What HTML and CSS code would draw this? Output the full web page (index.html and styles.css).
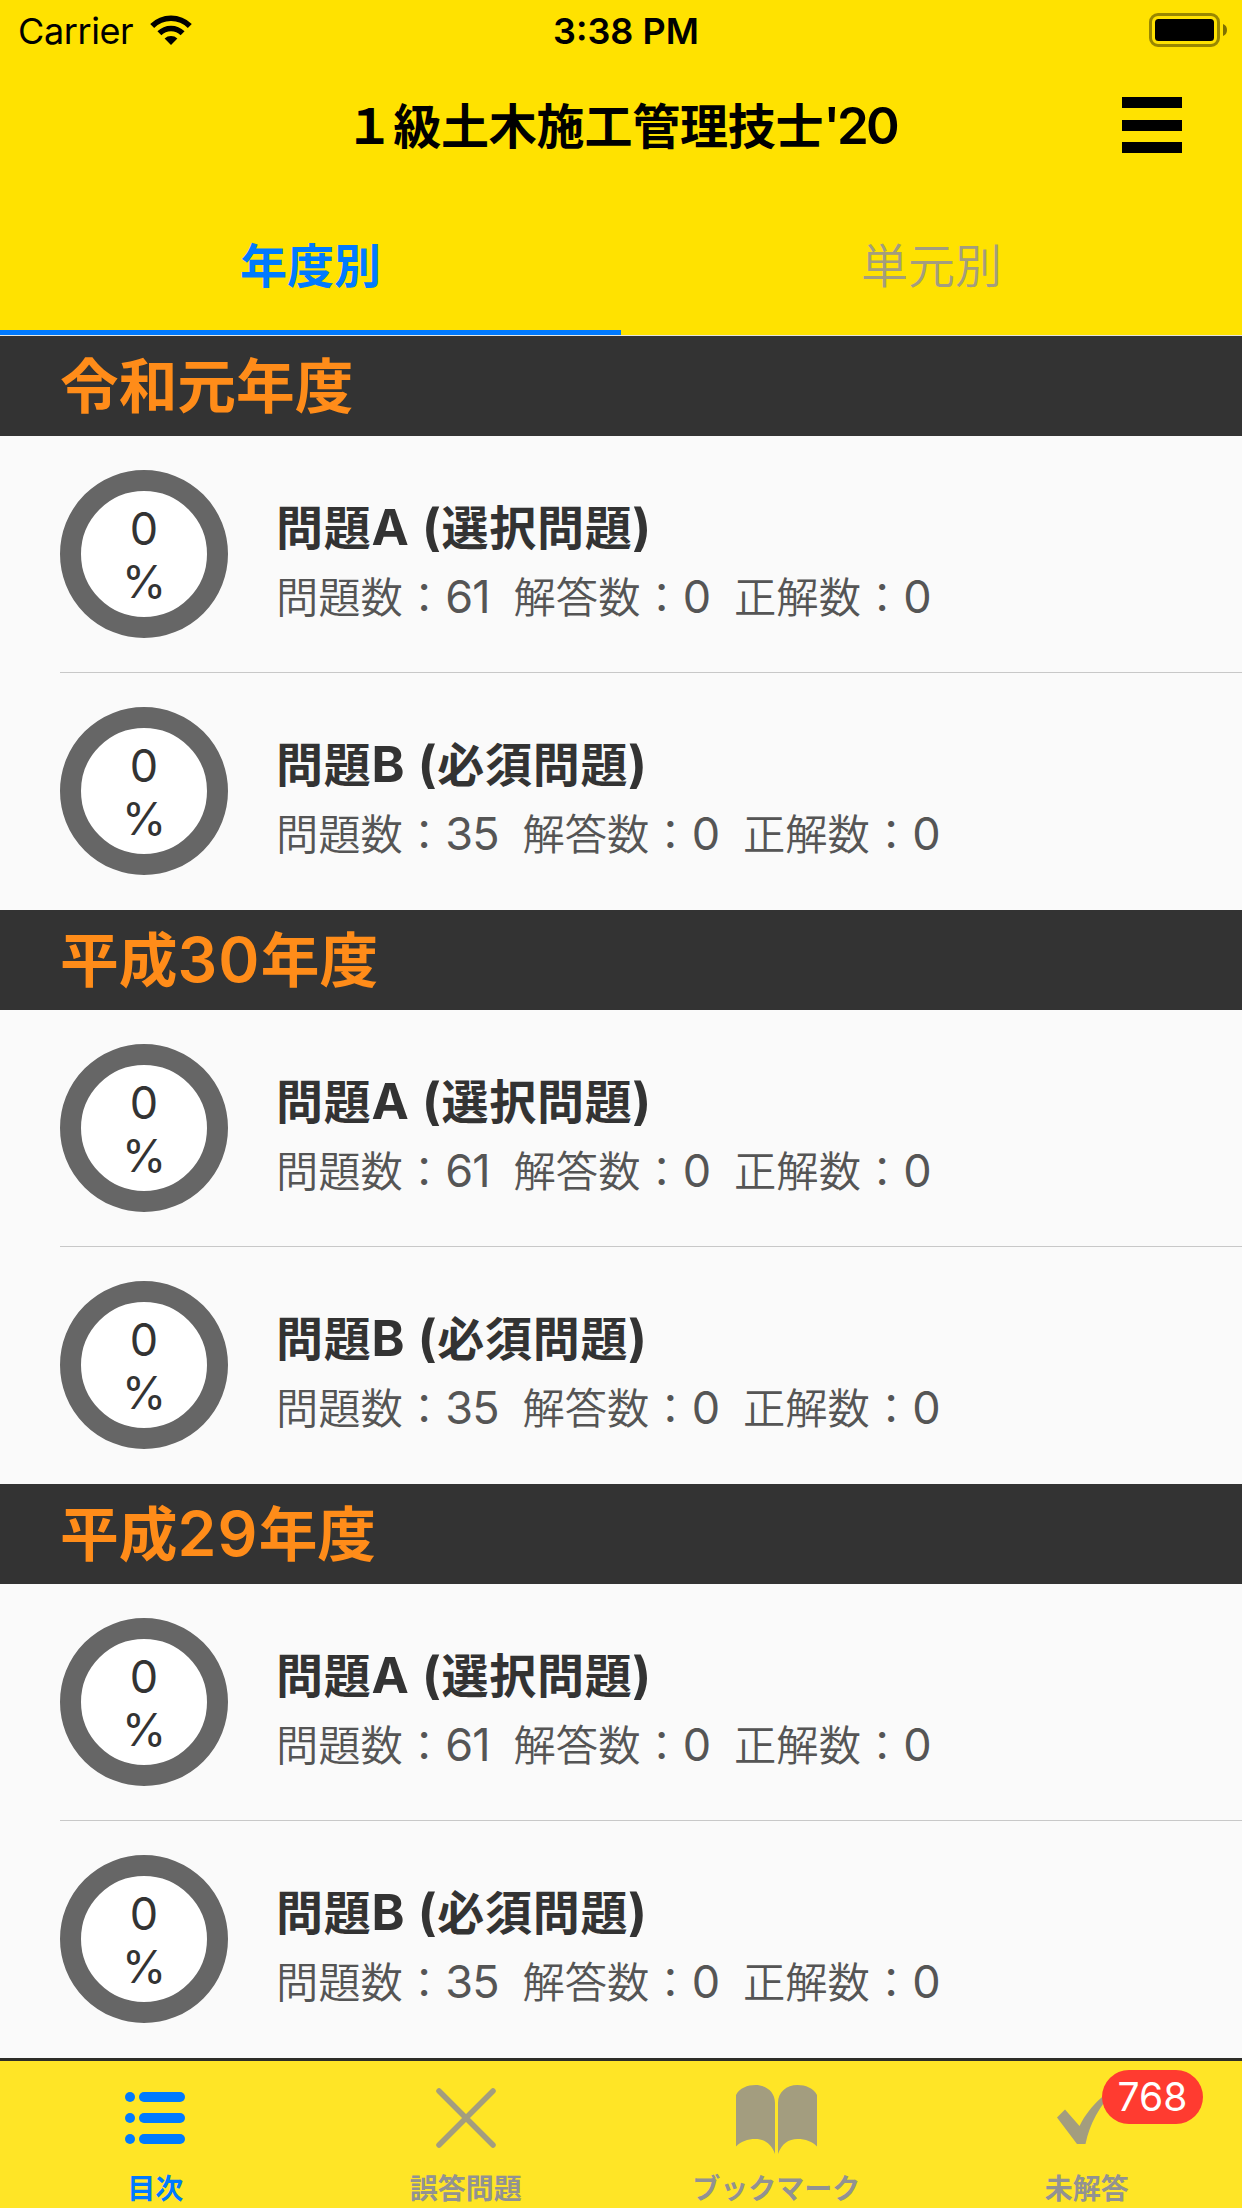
FILE: index.html
```html
<!DOCTYPE html>
<html lang="ja">
<head>
	<meta charset="utf-8">
	<title>１級土木施工管理技士'20</title>
	<link rel="stylesheet" href="styles.css">
</head>
<body>
	<header class="top">
		<div class="status">
			<div class="carrier">
				<span>Carrier</span>
				<svg width="42" height="30" viewBox="0 0 42 30">
					<path d="M21 30L14.600 23.500A9.500 9.500 0 0 1 27.400 23.500Z"/>
					<path d="M9.400 18.300A16.500 16.500 0 0 1 32.600 18.300M2.200 11A26.700 26.700 0 0 1 39.800 11" fill="none" stroke="#000" stroke-width="5.600"/>
				</svg>
			</div>
			<div class="time">3:38 PM</div>
			<div class="battery">
				<svg width="78" height="34" viewBox="0 0 78 34">
					<rect x="1.500" y="1.500" width="68" height="31" rx="7.500" fill="none" stroke="#000" stroke-opacity=".4" stroke-width="3"/>
					<rect x="6" y="6" width="59" height="22" rx="3.500"/>
					<path d="M74 11a6.500 6.500 0 0 1 0 12z" fill-opacity=".5"/>
				</svg>
			</div>
		</div>
		<div class="navbar">
			<h1>１級土木施工管理技士<span class="en">'20</span></h1>
			<div class="menu"><i></i><i></i><i></i></div>
		</div>
		<nav class="tabs">
			<a class="on">年度別</a>
			<a>単元別</a>
		</nav>
	</header>

	<main class="list">
		<section>
			<h2>令和元年度</h2>
			<div class="row">
				<div class="ring"><span>0</span><span>%</span></div>
				<div class="info">
					<h3>問題<span class="en">A (</span>選択問題<span class="en">)</span></h3>
					<p>問題数：<span class="en">61  </span>解答数：<span class="en">0  </span>正解数：<span class="en">0</span></p>
				</div>
			</div>
			<div class="row">
				<div class="ring"><span>0</span><span>%</span></div>
				<div class="info">
					<h3>問題<span class="en">B (</span>必須問題<span class="en">)</span></h3>
					<p>問題数：<span class="en">35  </span>解答数：<span class="en">0  </span>正解数：<span class="en">0</span></p>
				</div>
			</div>
		</section>
		<section>
			<h2>平成<span class="en">30</span>年度</h2>
			<div class="row">
				<div class="ring"><span>0</span><span>%</span></div>
				<div class="info">
					<h3>問題<span class="en">A (</span>選択問題<span class="en">)</span></h3>
					<p>問題数：<span class="en">61  </span>解答数：<span class="en">0  </span>正解数：<span class="en">0</span></p>
				</div>
			</div>
			<div class="row">
				<div class="ring"><span>0</span><span>%</span></div>
				<div class="info">
					<h3>問題<span class="en">B (</span>必須問題<span class="en">)</span></h3>
					<p>問題数：<span class="en">35  </span>解答数：<span class="en">0  </span>正解数：<span class="en">0</span></p>
				</div>
			</div>
		</section>
		<section>
			<h2>平成<span class="en">29</span>年度</h2>
			<div class="row">
				<div class="ring"><span>0</span><span>%</span></div>
				<div class="info">
					<h3>問題<span class="en">A (</span>選択問題<span class="en">)</span></h3>
					<p>問題数：<span class="en">61  </span>解答数：<span class="en">0  </span>正解数：<span class="en">0</span></p>
				</div>
			</div>
			<div class="row">
				<div class="ring"><span>0</span><span>%</span></div>
				<div class="info">
					<h3>問題<span class="en">B (</span>必須問題<span class="en">)</span></h3>
					<p>問題数：<span class="en">35  </span>解答数：<span class="en">0  </span>正解数：<span class="en">0</span></p>
				</div>
			</div>
		</section>
	</main>

	<footer class="tabbar">
		<a class="on">
			<svg width="90" height="90" viewBox="0 0 90 90">
				<circle cx="20" cy="36" r="5"/><rect x="29" y="31" width="46" height="10" rx="5"/>
				<circle cx="20" cy="57" r="5"/><rect x="29" y="52" width="46" height="10" rx="5"/>
				<circle cx="20" cy="78" r="5"/><rect x="29" y="73" width="46" height="10" rx="5"/>
			</svg>
			<span>目次</span>
		</a>
		<a>
			<svg width="90" height="90" viewBox="0 0 90 90">
				<path d="M18 30L72 84M72 30L18 84" fill="none" stroke="#a39d7f" stroke-width="5.500" stroke-linecap="round"/>
			</svg>
			<span>誤答問題</span>
		</a>
		<a>
			<svg width="90" height="90" viewBox="0 0 90 90">
				<path d="M5 34C8.500 27 16.500 24 24.500 24C35.500 24 44 31 44 42V93C40.500 83 33.500 78 24.500 78C16.500 78 9.500 80.500 5 85.500Z"/>
				<path d="M86 34C82.500 27 74.500 24 66.500 24C55.500 24 47 31 47 42V93C50.500 83 57.500 78 66.500 78C74.500 78 81.500 80.500 86 85.500Z"/>
			</svg>
			<span>ブックマーク</span>
		</a>
		<a>
			<svg width="90" height="90" viewBox="0 0 90 90">
				<path d="M15 56.500L23 48.500L37.500 65C43 54 50 45 59 37L72 25L74 27C57 46 48 62 43.500 83H35Z"/>
			</svg>
			<span>未解答</span>
			<b class="badge">768</b>
		</a>
	</footer>
</body>
</html>
```

FILE: styles.css
```css
*{
	margin: 0px;
	padding: 0px;
	box-sizing: border-box;
}
body{
	width: 1242px;
	height: 2208px;
	overflow: hidden;
	background: #fafafa;
	color: #333;
	font-family: Inter, "Noto Sans CJK JP", sans-serif;
}
svg{
	display: block;
	overflow: visible;
}
.en{
	font-size: 1.064em;
	line-height: 1;
	white-space: pre;
}
.top{
	height: 336px;
	background: #ffe200;
	color: #000;
	border-bottom: 1px solid #e6e6dc;
}
.status{
	display: grid;
	grid-template-columns: 1fr auto 1fr;
	height: 60px;
	padding: 0 15px 0 18px;
	font-size: 36px;
	line-height: 62px;
}
.carrier{
	display: flex;
	letter-spacing: -0.400px;
}
.carrier svg{
	margin: 15px 0 0 17px;
}
.time{
	font-weight: 600;
	padding-left: 7px;
}
.battery{
	display: flex;
	justify-content: flex-end;
	padding-top: 13px;
}
.navbar{
	display: grid;
	grid-template-columns: 120px 1fr 120px;
	height: 134px;
}
.navbar h1{
	grid-column: 2;
	font-size: 48px;
	font-weight: 600;
	line-height: 134px;
	text-align: center;
	white-space: nowrap;
	letter-spacing: -0.200px;
}
.navbar h1 .en{
	letter-spacing: -3px;
}
.menu{
	display: flex;
	flex-direction: column;
	gap: 11.500px;
	width: 60px;
	padding-top: 37px;
}
.menu i{
	height: 11px;
	background: #000;
}
.tabs{
	display: flex;
	height: 141px;
}
.tabs a{
	flex: 1;
	font-size: 47px;
	font-weight: 350;
	line-height: 144px;
	text-align: center;
	color: #a39d7f;
}
.tabs a.on{
	font-weight: 600;
	color: #007aff;
	border-bottom: 5px solid #007aff;
}
.list h2{
	height: 100px;
	padding-left: 60px;
	background: #333;
	color: #ff8c19;
	font-size: 58.700px;
	font-weight: 600;
	line-height: 101px;
}
.list h2 .en{
	letter-spacing: 1.200px;
}
.row{
	display: flex;
	height: 237px;
	padding: 34px 0 0 60px;
}
.row:nth-child(2){
	background: linear-gradient(#c8c8c8, #c8c8c8) 60px 236px / 100% 1px no-repeat;
}
.ring{
	width: 168px;
	height: 168px;
	padding-top: 11px;
	border: 21px solid #666;
	border-radius: 50%;
	background: #fff;
	font-size: 45px;
	line-height: 53px;
	text-align: center;
}
.ring span{
	display: block;
}
.info{
	padding: 23px 0 0 48px;
	white-space: nowrap;
}
.info h3{
	font-size: 47px;
	font-weight: 700;
	line-height: 70px;
	letter-spacing: 0.700px;
}
.info p{
	font-size: 42.300px;
	font-weight: 350;
	line-height: 70px;
	color: #555;
}
.info p .en{
	font-weight: 400;
	letter-spacing: -0.800px;
}
.tabbar{
	display: flex;
	height: 150px;
	border-top: 3px solid #2d2d28;
	background: #ffe526;
}
.tabbar a{
	position: relative;
	flex: 1;
	display: flex;
	flex-direction: column;
	align-items: center;
	fill: #a39d7f;
	color: #929292;
	font-size: 28px;
	font-weight: 600;
}
.tabbar a.on{
	fill: #007aff;
	color: #007aff;
}
.tabbar span{
	margin-top: 20px;
	line-height: 36px;
}
.badge{
	position: absolute;
	top: 9px;
	right: 39px;
	width: 101px;
	height: 54px;
	border-radius: 27px;
	background: #ff3b30;
	color: #fff;
	font-size: 39px;
	font-weight: 400;
	line-height: 53px;
	text-align: center;
}
```
